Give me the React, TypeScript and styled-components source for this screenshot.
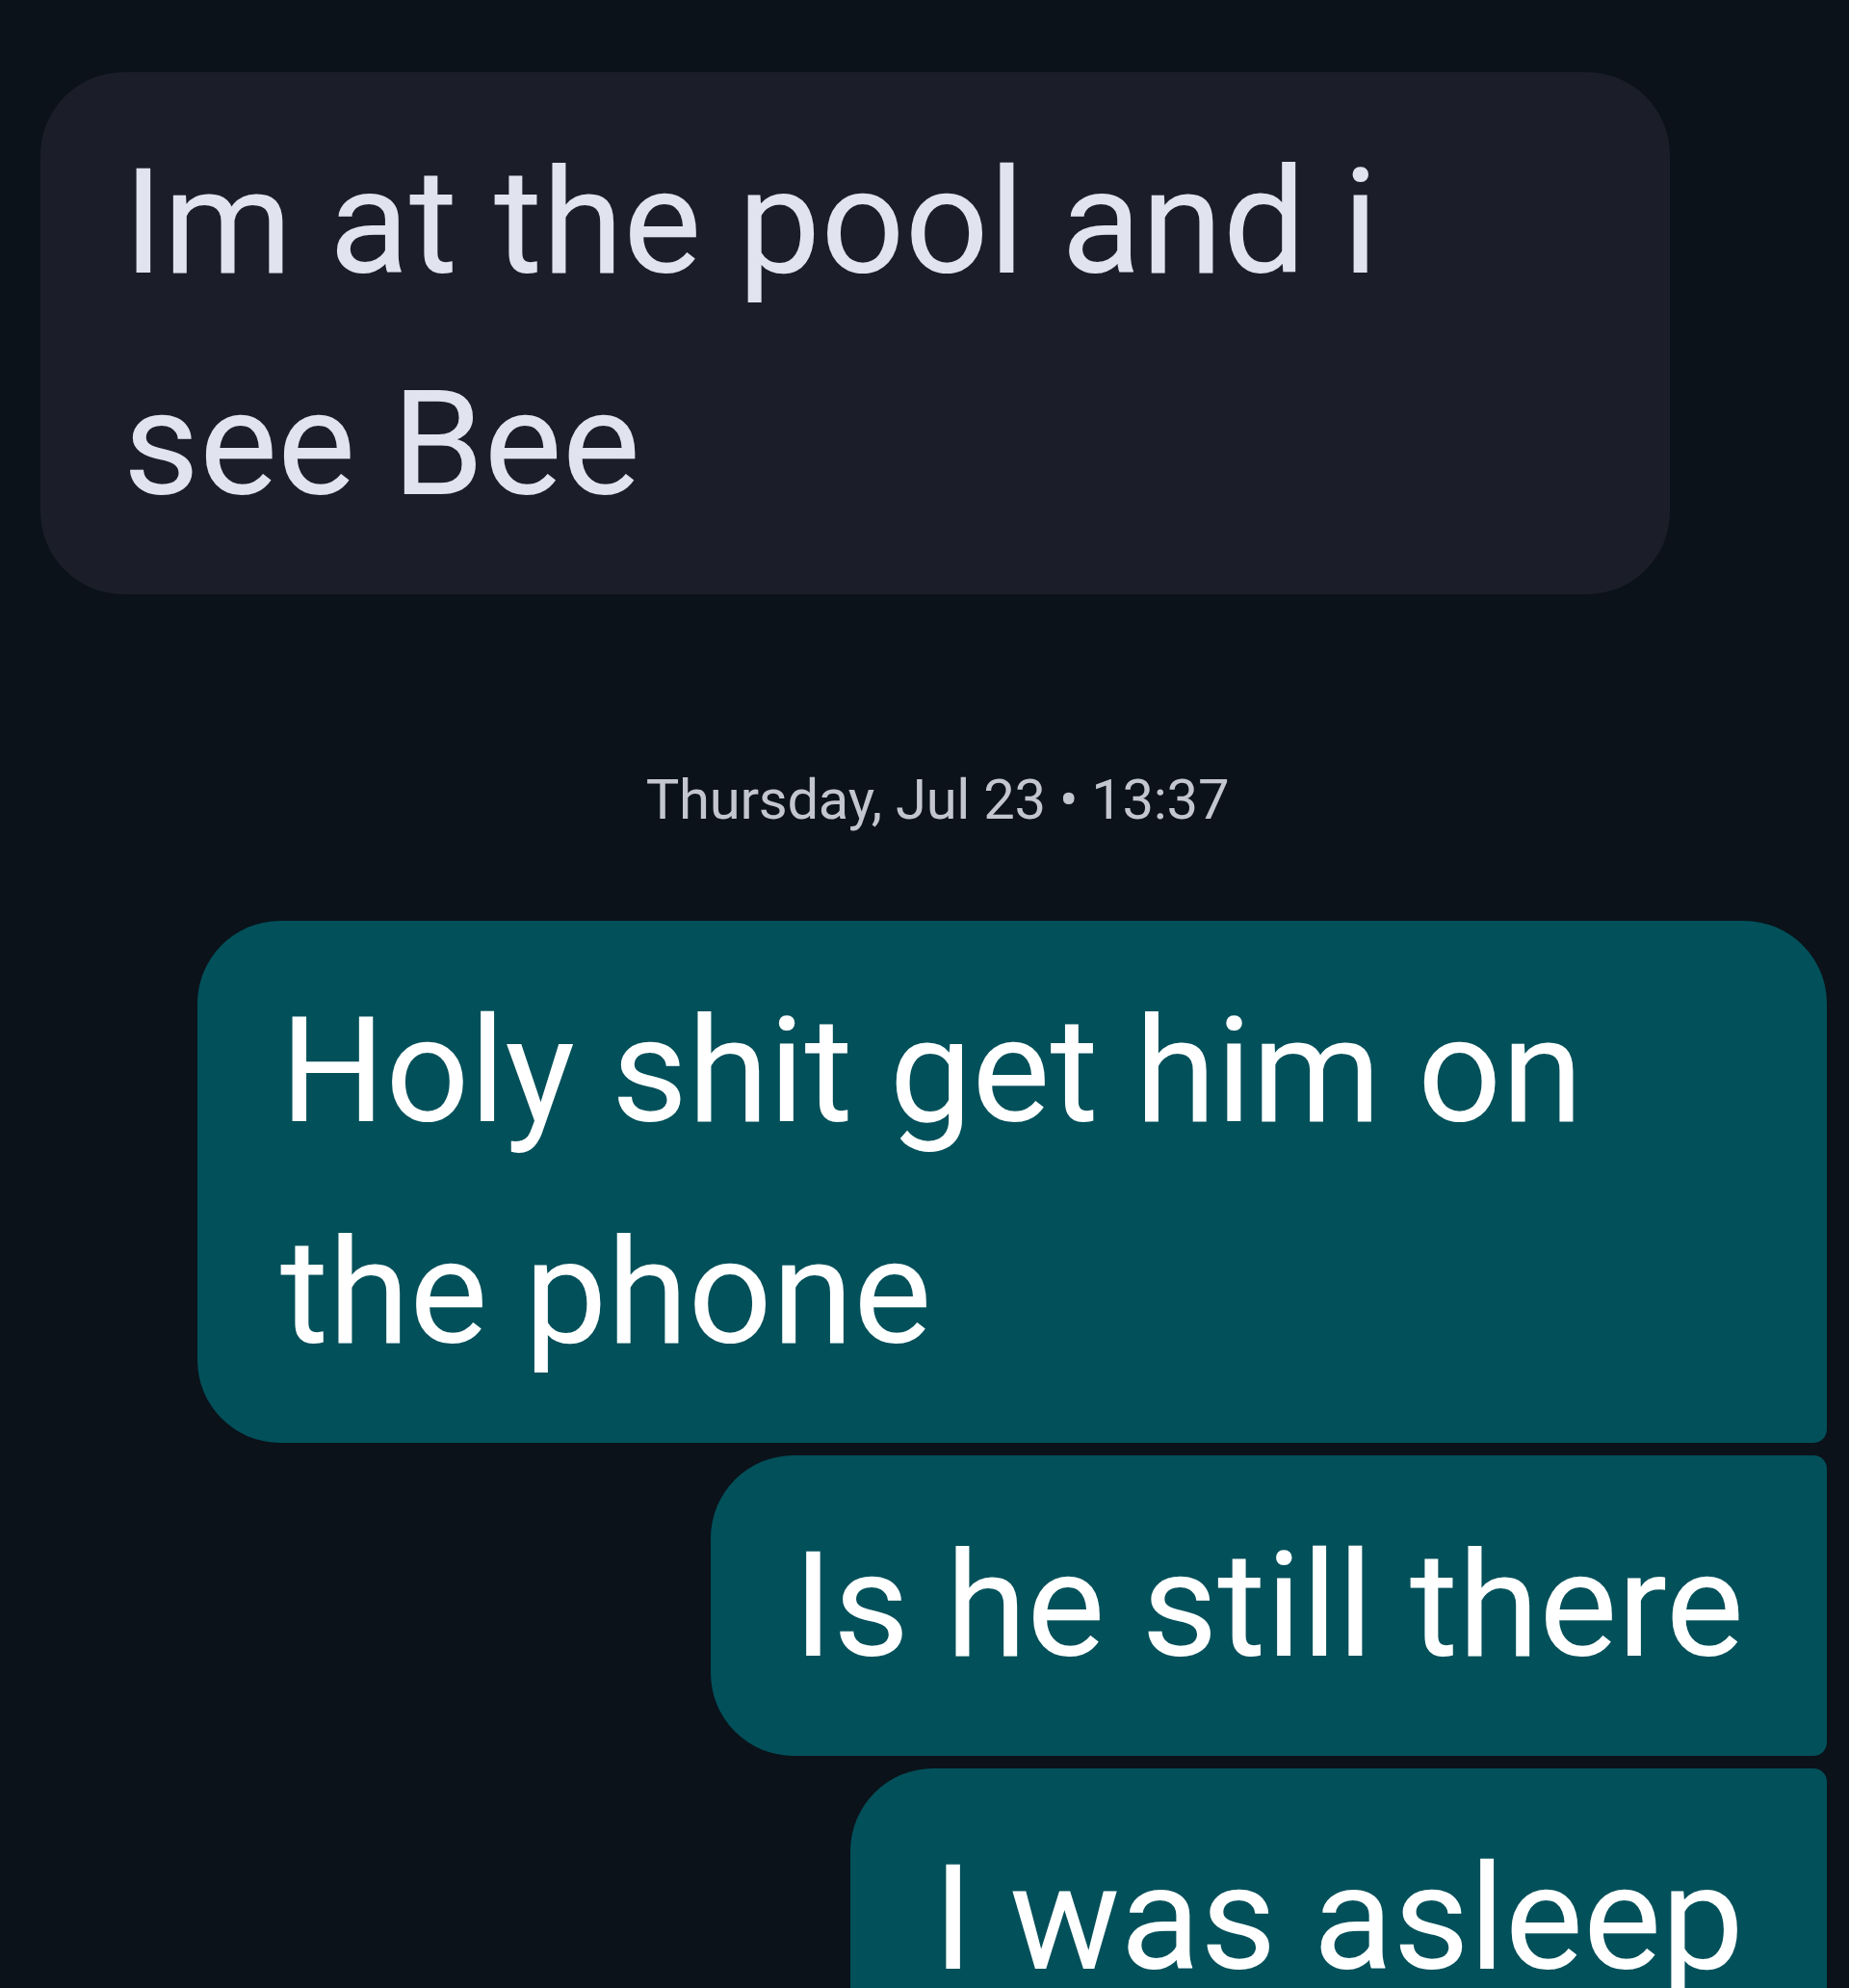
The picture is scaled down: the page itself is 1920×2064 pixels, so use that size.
import React from "react";
import styled, { createGlobalStyle } from "styled-components";

const Global = createGlobalStyle`
  html, body {
    margin: 0;
    padding: 0;
    background: #0b121a;
  }
  body {
    font-family: Roboto, "Noto Sans", "Liberation Sans", sans-serif;
    overflow: hidden;
  }
`;

const Screen = styled.div`
  width: 1920px;
  height: 2064px;
  overflow: hidden;
  background: #0b121a;
  box-sizing: border-box;
  padding: 75px 23px 0 42px;
  display: flex;
  flex-direction: column;
`;

type Corners = { tl: number; tr: number; br: number; bl: number };

const Bubble = styled.div<{ $out?: boolean; $r: Corners; $mt?: number }>`
  align-self: ${(p) => (p.$out ? "flex-end" : "flex-start")};
  max-width: 1692px;
  box-sizing: border-box;
  padding: 41px 86px;
  margin-top: ${(p) => p.$mt ?? 0}px;
  background: ${(p) => (p.$out ? "#02505a" : "#1b1e29")};
  color: ${(p) => (p.$out ? "#ffffff" : "#e1e3ef")};
  font-size: 153px;
  line-height: 230px;
  font-weight: 400;
  border-radius: ${(p) => `${p.$r.tl}px ${p.$r.tr}px ${p.$r.br}px ${p.$r.bl}px`};
  flex-shrink: 0;
`;

const Stamp = styled.div`
  margin-top: 179px;
  margin-bottom: 92px;
  text-align: center;
  padding-left: 8px;
  font-size: 58px;
  line-height: 68px;
  color: #c3c6cf;
  letter-spacing: -0.3px;
`;

const BIG = 86;
const SMALL = 14;

export default function App() {
  return (
    <>
      <Global />
      <Screen>
        <Bubble $r={{ tl: BIG, tr: BIG, br: BIG, bl: BIG }}>
          Im at the pool and i see Bee
        </Bubble>
        <Stamp>Thursday, Jul 23 • 13:37</Stamp>
        <Bubble $out $r={{ tl: BIG, tr: BIG, br: SMALL, bl: BIG }}>
          Holy shit get him on the phone
        </Bubble>
        <Bubble $out $mt={13} $r={{ tl: BIG, tr: SMALL, br: SMALL, bl: BIG }}>
          Is he still there
        </Bubble>
        <Bubble $out $mt={13} $r={{ tl: BIG, tr: SMALL, br: BIG, bl: BIG }}>
          I was asleep
        </Bubble>
      </Screen>
    </>
  );
}
